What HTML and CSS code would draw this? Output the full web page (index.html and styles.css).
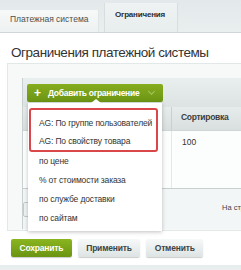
FILE: index.html
```html
<!DOCTYPE html>
<html>
<head>
<meta charset="utf-8">
<link rel="stylesheet" href="styles.css">
</head>
<body>
<div class="tabs">
  <div class="tab">Платежная система</div>
  <div class="tab tab-active">Ограничения</div>
</div>
<h1 class="title">Ограничения платежной системы</h1>
<div class="panel">
  <div class="grid">
    <div class="toolbar">
      <div class="btn-add"><span class="plus">+</span><span>Добавить ограничение</span><span class="chev"></span></div>
    </div>
    <div class="thead">
      <div class="th th-left"></div>
      <div class="th th-sort">Сортировка</div>
    </div>
    <div class="trow">
      <div class="td td-left"></div>
      <div class="td td-sort">100</div>
    </div>
    <div class="tfoot">
      <div class="mini-btn"></div>
      <div class="pager">На стр</div>
    </div>
  </div>
  <div class="dropdown">
    <div class="pointer"></div>
    <div class="marked">
      <div class="item">AG: По группе пользователей</div>
      <div class="item">AG: По свойству товара</div>
    </div>
    <div class="item">по цене</div>
    <div class="item">% от стоимости заказа</div>
    <div class="item">по службе доставки</div>
    <div class="item">по сайтам</div>
  </div>
</div>
<div class="actions">
  <div class="btn btn-save">Сохранить</div>
  <div class="btn">Применить</div>
  <div class="btn">Отменить</div>
</div>
<div class="bottom-strip"></div>
</body>
</html>
```

FILE: styles.css
```css
html, body {
  margin: 0;
  padding: 0;
  overflow: hidden;
  width: 241px;
  height: 270px;
  background: #fff;
  font-family: "Liberation Sans", Arial, sans-serif;
  color: #333;
}
.tabs {
  height: 32px;
  background: linear-gradient(#e3e9ea, #e9eeef);
  border-bottom: 1px solid #cfd6d7;
  display: flex;
  align-items: flex-end;
  gap: 5px;
}
.tab {
  width: 88px;
  height: 22px;
  padding-left: 10px;
  box-sizing: content-box;
  background: linear-gradient(#f7f9f9, #eef1f1);
  border-right: 1px solid #dfe4e4;
  font-size: 8.5px;
  line-height: 19px;
  color: #4a5050;
  white-space: nowrap;
}
.tab-active {
  width: 62px;
  height: 29px;
  line-height: 24px;
  font-size: 8px;
  letter-spacing: -0.2px;
  font-weight: bold;
  background: linear-gradient(#eef2f2, #e8eded);
  border-left: 1px solid #d8dede;
  border-right: 1px solid #d8dede;
  color: #2b2f2f;
}
.title {
  margin: 10px 0 0 11px;
  font-weight: normal;
  font-size: 13.5px;
  letter-spacing: -0.45px;
  line-height: 20px;
  color: #333;
  white-space: nowrap;
}
.panel {
  position: relative;
  margin: 0 -20px 0 7px;
  height: 168px;
  box-sizing: border-box;
  border: 1px solid #e2e7e7;
  background: #f7f9f9;
  padding: 14px 0 0 14px;
}
.grid {
  border-left: 1px solid #c9d0d0;
}
.toolbar {
  height: 29px;
  background: linear-gradient(#e9eeee, #dde3e3);
  padding: 5px 0 0 4px;
  box-sizing: border-box;
}
.btn-add {
  display: inline-flex;
  align-items: center;
  height: 18px;
  width: 136px;
  box-sizing: border-box;
  padding: 0 0 0 7px;
  background: linear-gradient(#86ad1e, #6b9414);
  border-radius: 2px;
  color: #fff;
  font-size: 8.5px;
  letter-spacing: -0.3px;
  font-weight: bold;
  white-space: nowrap;
}
.plus {
  font-size: 12px;
  letter-spacing: 0;
  margin-right: 7px;
  line-height: 12px;
}
.chev {
  width: 4px;
  height: 4px;
  border-right: 1px solid #a6c65a;
  border-bottom: 1px solid #a6c65a;
  transform: rotate(45deg);
  margin: -3px 0 0 10px;
}
.thead {
  display: flex;
  height: 23px;
  background: linear-gradient(#e6ebeb, #d9dfdf);
  border-bottom: 1px solid #cfd6d6;
}
.th-left {
  width: 148px;
  border-right: 1px solid #c8cfcf;
}
.th-sort {
  padding-left: 9px;
  font-size: 8.5px;
  letter-spacing: -0.3px;
  font-weight: bold;
  line-height: 20px;
  color: #3a3f3f;
}
.trow {
  display: flex;
  height: 57px;
  background: #fcfdfd;
  border-bottom: 1px solid #c8cfcf;
}
.td-left {
  width: 148px;
  border-right: 1px solid #e3e8e8;
}
.td-sort {
  padding: 6px 0 0 10px;
  font-size: 8.5px;
  color: #333;
}
.tfoot {
  display: flex;
  align-items: center;
  height: 40px;
  background: #f3f6f6;
}
.mini-btn {
  width: 8px;
  height: 13px;
  border: 1px solid #c4cbcb;
  border-radius: 2px;
  background: #eef2f2;
}
.pager {
  margin-left: 189px;
  font-size: 7.5px;
  color: #444;
  white-space: nowrap;
  margin-top: -4px;
}
.dropdown {
  position: absolute;
  left: 20px;
  top: 39px;
  width: 134px;
  height: 128px;
  box-sizing: border-box;
  background: #fff;
  box-shadow: 0 1px 4px rgba(0,0,0,0.25);
  padding: 5px 0 0 1px;
}
.pointer {
  position: absolute;
  top: -4px;
  left: 63px;
  width: 0;
  height: 0;
  border-left: 5px solid transparent;
  border-right: 5px solid transparent;
  border-bottom: 4px solid #fff;
}
.marked {
  width: 129px;
  height: 44px;
  box-sizing: border-box;
  border: 2px solid #d9474a;
  border-radius: 3px;
  padding-top: 4px;
}
.marked .item {
  padding-left: 8px;
}
.item {
  height: 19px;
  line-height: 19px;
  padding-left: 10px;
  font-size: 8.5px;
  letter-spacing: -0.15px;
  color: #333;
  white-space: nowrap;
}
.marked .item:first-child {
  height: 18px;
  line-height: 18px;
}
.actions {
  display: flex;
  gap: 6px;
  padding: 8px 0 0 11px;
}
.btn {
  height: 18px;
  padding: 0 8.5px;
  line-height: 18px;
  font-size: 8.5px;
  letter-spacing: -0.2px;
  font-weight: bold;
  color: #3d4545;
  background: linear-gradient(#f7f9f9, #dde3e3);
  border-radius: 2px;
  box-shadow: 0 1px 1px rgba(0,0,0,0.2);
  white-space: nowrap;
}
.btn-save {
  color: #fff;
  background: linear-gradient(#8ab51f, #6a9412);
}
.bottom-strip {
  margin-top: 8px;
  height: 10px;
  background: linear-gradient(#e6ebeb, #eef2f2);
}
```
